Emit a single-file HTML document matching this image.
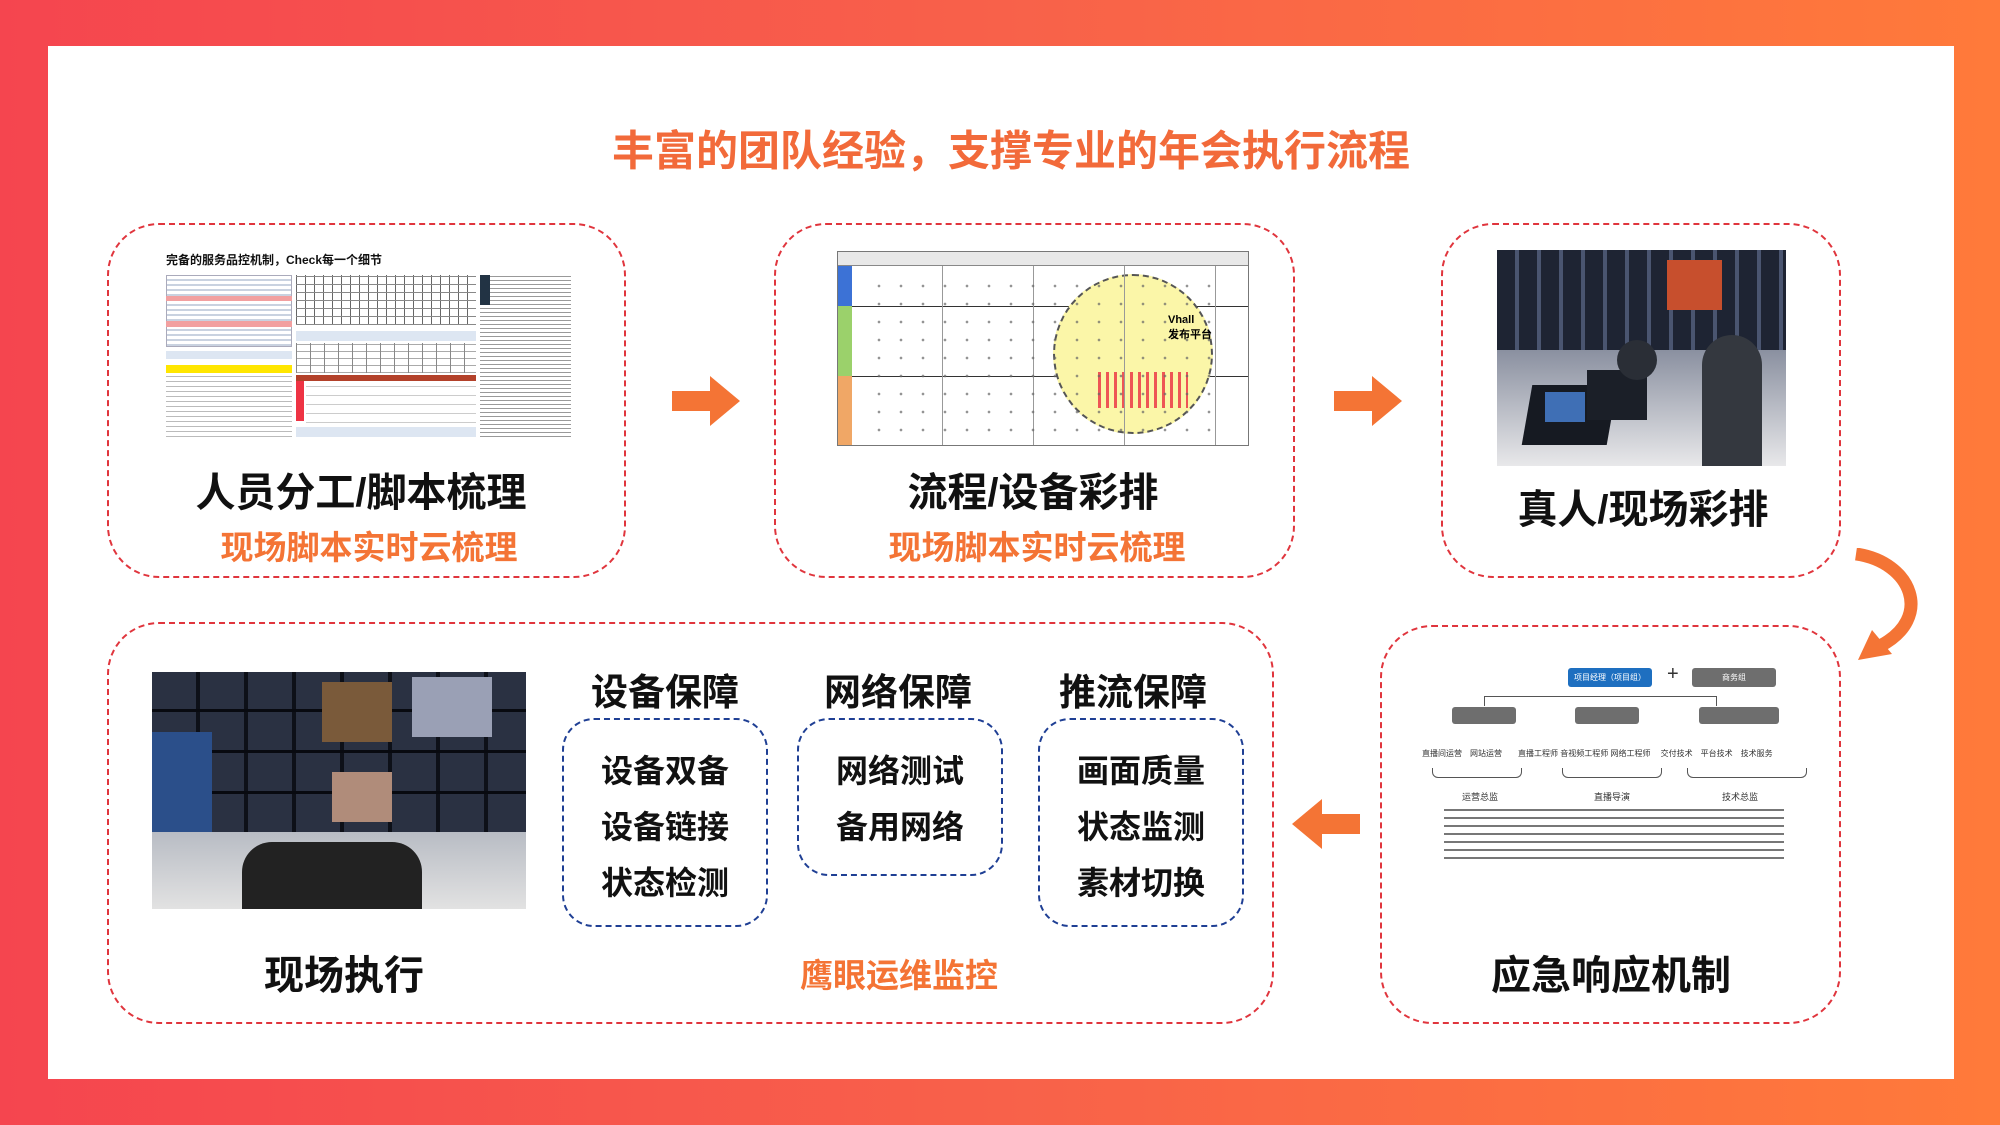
<!DOCTYPE html>
<html><head><meta charset="utf-8"><style>
*{margin:0;padding:0;box-sizing:border-box}
body{width:2000px;height:1125px;overflow:hidden;background:linear-gradient(90deg,#f5454f 0%,#f8614a 50%,#ff7a3a 100%);font-family:"Liberation Sans","Noto Sans CJK SC",sans-serif;position:relative}
.panel{position:absolute;left:48px;top:46px;width:1906px;height:1033px;background:#fff}
.a{position:absolute}
.box{position:absolute;border:2.5px dashed #e0353d;border-radius:52px}
.nb{position:absolute;border:2.5px dashed #1f3f94;border-radius:32px}
.t{position:absolute;transform:translate(-50%,-50%);white-space:nowrap;font-weight:bold}
.big{font-size:40px;color:#111}
.or{font-size:33px;color:#f47435}
.hd{font-size:37px;color:#111}
.it{font-size:32px;color:#111}
.s{font-size:9px;color:#333}
</style></head><body>
<div class="panel"></div>
<div class="t" style="left:1011px;top:148px;font-size:42px;color:#f26a3a">丰富的团队经验，支撑专业的年会执行流程</div>

<div class="box" style="left:107px;top:223px;width:519px;height:355px"></div>
<div class="box" style="left:774px;top:223px;width:521px;height:355px"></div>
<div class="box" style="left:1441px;top:223px;width:400px;height:355px"></div>
<div class="box" style="left:107px;top:622px;width:1167px;height:402px"></div>
<div class="box" style="left:1380px;top:625px;width:461px;height:399px"></div>

<!-- image1 spreadsheet -->
<div class="a" style="left:166px;top:251px;width:405px;height:186px">
<div class="a" style="left:0;top:0;font-size:12px;font-weight:bold;color:#111">完备的服务品控机制，Check每一个细节</div>
<div class="a" style="left:0;top:24px;width:126px;height:72px;background:repeating-linear-gradient(0deg,#c9d2e0 0 2px,#fff 2px 5px),#fff;border:1px solid #aab"></div>
<div class="a" style="left:0;top:45px;width:126px;height:5px;background:#f2a0a0"></div>
<div class="a" style="left:0;top:70px;width:126px;height:6px;background:#f2a0a0"></div>
<div class="a" style="left:0;top:100px;width:126px;height:8px;background:#dde6f2"></div>
<div class="a" style="left:0;top:114px;width:126px;height:8px;background:#ffe600"></div>
<div class="a" style="left:0;top:122px;width:126px;height:64px;background:repeating-linear-gradient(0deg,#bbb 0 1px,#fff 1px 5px)"></div>
<div class="a" style="left:130px;top:24px;width:180px;height:50px;background:repeating-linear-gradient(0deg,#888 0 1px,transparent 1px 8px),repeating-linear-gradient(90deg,#666 0 1px,#fff 1px 9px)"></div>
<div class="a" style="left:130px;top:80px;width:180px;height:10px;background:#dde6f2"></div>
<div class="a" style="left:130px;top:92px;width:180px;height:30px;background:repeating-linear-gradient(90deg,#888 0 1px,transparent 1px 14px),repeating-linear-gradient(0deg,#aaa 0 1px,#fff 1px 7px)"></div>
<div class="a" style="left:130px;top:124px;width:180px;height:6px;background:#b3412a"></div>
<div class="a" style="left:130px;top:130px;width:8px;height:40px;background:#e34"></div>
<div class="a" style="left:140px;top:132px;width:170px;height:40px;background:repeating-linear-gradient(0deg,#ccc 0 1px,#fff 1px 9px)"></div>
<div class="a" style="left:130px;top:176px;width:180px;height:10px;background:#dde6f2"></div>
<div class="a" style="left:314px;top:24px;width:91px;height:162px;background:repeating-linear-gradient(0deg,#999 0 1px,#fff 1px 4px)"></div>
<div class="a" style="left:314px;top:24px;width:10px;height:30px;background:#234"></div>
</div>

<!-- image2 flow -->
<div class="a" style="left:837px;top:251px;width:412px;height:195px;border:1px solid #777;background:#fff;overflow:hidden">
<div class="a" style="left:0;top:0;width:412px;height:14px;background:#e8e8e8;border-bottom:1px solid #888"></div>
<div class="a" style="left:0;top:14px;width:14px;height:40px;background:#3c72d6"></div>
<div class="a" style="left:0;top:54px;width:14px;height:70px;background:#9bd16b"></div>
<div class="a" style="left:0;top:124px;width:14px;height:71px;background:#f0a766"></div>
<div class="a" style="left:14px;top:54px;width:398px;height:1px;background:#333"></div>
<div class="a" style="left:14px;top:124px;width:398px;height:1px;background:#333"></div>
<div class="a" style="left:215px;top:22px;width:160px;height:160px;border-radius:50%;background:#fbf6a8;border:2px dashed #555"></div>
<div class="a" style="left:260px;top:120px;width:90px;height:36px;background:repeating-linear-gradient(90deg,#e55 0 3px,transparent 3px 8px)"></div>
<div class="a" style="left:330px;top:62px;font-size:11px;font-weight:bold">Vhall<br>发布平台</div>
<div class="a" style="left:14px;top:14px;width:398px;height:181px;background:repeating-linear-gradient(90deg,transparent 0 90px,#999 90px 91px)"></div>
<div class="a" style="left:30px;top:25px;width:360px;height:160px;background:radial-gradient(circle,#666 1.2px,transparent 1.5px) 0 0/22px 18px;opacity:.7"></div>
</div>

<!-- image3 photo -->
<div class="a" style="left:1497px;top:250px;width:289px;height:216px;background:linear-gradient(180deg,#3a4660 0%,#6d7890 40%,#d7dae0 70%,#f0f0f0 100%);overflow:hidden">
<div class="a" style="left:0;top:0;width:289px;height:100px;background:repeating-linear-gradient(90deg,#1e2433 0 18px,#4a5570 18px 22px)"></div>
<div class="a" style="left:170px;top:10px;width:55px;height:50px;background:#c74f2d"></div>
<div class="a" style="left:0;top:100px;width:289px;height:116px;background:linear-gradient(180deg,#8a90a0,#e8e8ea)"></div>
<div class="a" style="left:30px;top:135px;width:85px;height:60px;background:#161a22;transform:skewX(-10deg)"></div>
<div class="a" style="left:48px;top:142px;width:40px;height:30px;background:#3f6fb5"></div>
<div class="a" style="left:90px;top:120px;width:60px;height:50px;background:#1b1f28"></div>
<div class="a" style="left:205px;top:85px;width:60px;height:131px;background:#34383f;border-radius:30px 30px 0 0"></div>
<div class="a" style="left:120px;top:90px;width:40px;height:40px;background:#2a2e36;border-radius:50%"></div>
</div>

<!-- image4 photo -->
<div class="a" style="left:152px;top:672px;width:374px;height:237px;background:#1b2130;overflow:hidden">
<div class="a" style="left:0;top:0;width:374px;height:160px;background:repeating-linear-gradient(0deg,transparent 0 38px,#080a10 38px 41px),repeating-linear-gradient(90deg,#2a3142 0 44px,#0d1018 44px 48px)"></div>
<div class="a" style="left:170px;top:10px;width:70px;height:60px;background:#7a5a3a"></div>
<div class="a" style="left:260px;top:5px;width:80px;height:60px;background:#9aa0b5"></div>
<div class="a" style="left:180px;top:100px;width:60px;height:50px;background:#b08c7a"></div>
<div class="a" style="left:0;top:60px;width:60px;height:100px;background:#2b4f8a"></div>
<div class="a" style="left:0;top:160px;width:374px;height:77px;background:linear-gradient(180deg,#b8bcc4,#e2e2e2)"></div>
<div class="a" style="left:90px;top:170px;width:180px;height:67px;background:#222;border-radius:30px 30px 0 0"></div>
</div>

<!-- org chart -->
<div class="a" style="left:1422px;top:663px;width:396px;height:200px">
<div class="a" style="left:146px;top:5px;width:84px;height:19px;background:#1e6fc0;border-radius:3px;color:#fff;font-size:8px;text-align:center;line-height:19px">项目经理（项目组）</div>
<div class="a" style="left:245px;top:0;font-size:20px;color:#333">+</div>
<div class="a" style="left:270px;top:5px;width:84px;height:19px;background:#6e6e6e;border-radius:3px;color:#fff;font-size:8px;text-align:center;line-height:19px">商务组</div>
<div class="a" style="left:62px;top:33px;width:233px;height:10px;border:1px solid #555;border-bottom:0"></div>
<div class="a" style="left:30px;top:44px;width:64px;height:17px;background:#6e6e6e;border-radius:3px"></div>
<div class="a" style="left:153px;top:44px;width:64px;height:17px;background:#6e6e6e;border-radius:3px"></div>
<div class="a" style="left:277px;top:44px;width:80px;height:17px;background:#6e6e6e;border-radius:3px"></div>
<div class="a s" style="left:0;top:85px;width:396px;font-size:8px">直播间运营　网站运营　　直播工程师 音视频工程师 网络工程师　 交付技术　平台技术　技术服务</div>
<div class="a" style="left:10px;top:105px;width:90px;height:10px;border:1px solid #555;border-top:0;border-radius:0 0 6px 6px"></div>
<div class="a" style="left:140px;top:105px;width:100px;height:10px;border:1px solid #555;border-top:0;border-radius:0 0 6px 6px"></div>
<div class="a" style="left:265px;top:105px;width:120px;height:10px;border:1px solid #555;border-top:0;border-radius:0 0 6px 6px"></div>
<div class="a s" style="left:40px;top:127px;font-size:9px">运营总监</div>
<div class="a s" style="left:172px;top:127px;font-size:9px">直播导演</div>
<div class="a s" style="left:300px;top:127px;font-size:9px">技术总监</div>
<div class="a" style="left:22px;top:146px;width:340px;height:50px;background:repeating-linear-gradient(180deg,#777 0 2px,transparent 2px 8px)"></div>
</div>

<!-- arrows -->
<svg class="a" style="left:672px;top:376px" width="68" height="50"><polygon points="0,15 38,15 38,0 68,25 38,50 38,35 0,35" fill="#f47435"/></svg>
<svg class="a" style="left:1334px;top:376px" width="68" height="50"><polygon points="0,15 38,15 38,0 68,25 38,50 38,35 0,35" fill="#f47435"/></svg>
<svg class="a" style="left:1292px;top:799px" width="68" height="50"><polygon points="68,15 30,15 30,0 0,25 30,50 30,35 68,35" fill="#f47435"/></svg>
<svg class="a" style="left:1852px;top:548px" width="72" height="116"><path d="M4,6 C60,14 82,70 28,98" stroke="#f47435" stroke-width="13" fill="none"/><polygon points="6,112 20,82 40,106" fill="#f47435"/></svg>

<!-- box navy -->
<div class="nb" style="left:562px;top:718px;width:206px;height:209px"></div>
<div class="nb" style="left:797px;top:718px;width:206px;height:158px"></div>
<div class="nb" style="left:1038px;top:718px;width:206px;height:209px"></div>

<div class="t big" style="left:361px;top:489px">人员分工/脚本梳理</div>
<div class="t or" style="left:369px;top:545px">现场脚本实时云梳理</div>
<div class="t big" style="left:1033px;top:489px">流程/设备彩排</div>
<div class="t or" style="left:1037px;top:545px">现场脚本实时云梳理</div>
<div class="t big" style="left:1643px;top:506px">真人/现场彩排</div>
<div class="t big" style="left:344px;top:972px">现场执行</div>
<div class="t or" style="left:899px;top:973px">鹰眼运维监控</div>
<div class="t big" style="left:1611px;top:972px">应急响应机制</div>

<div class="t hd" style="left:665px;top:689px">设备保障</div>
<div class="t hd" style="left:898px;top:689px">网络保障</div>
<div class="t hd" style="left:1133px;top:689px">推流保障</div>
<div class="t it" style="left:665px;top:769px">设备双备</div>
<div class="t it" style="left:665px;top:825px">设备链接</div>
<div class="t it" style="left:665px;top:881px">状态检测</div>
<div class="t it" style="left:900px;top:769px">网络测试</div>
<div class="t it" style="left:900px;top:825px">备用网络</div>
<div class="t it" style="left:1141px;top:769px">画面质量</div>
<div class="t it" style="left:1141px;top:825px">状态监测</div>
<div class="t it" style="left:1141px;top:881px">素材切换</div>
</body></html>
